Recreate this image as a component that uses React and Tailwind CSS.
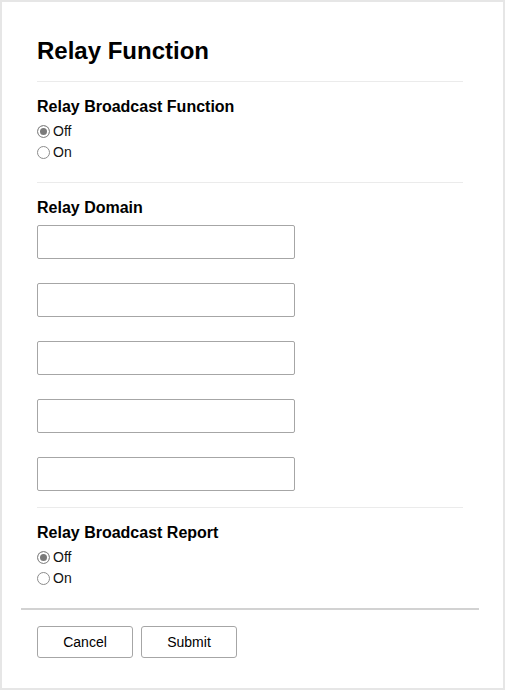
const font = { fontFamily: '"Liberation Sans", Arial, sans-serif' }

function Radio({ name, label, checked }) {
    return (
        <label className="flex items-center h-[21px] text-[14px] text-[#111]">
            <input
                type="radio"
                name={name}
                defaultChecked={checked}
                className="appearance-none m-0 w-[13px] h-[13px] rounded-full border border-[#8c8c8c] bg-white checked:bg-[#7a7a7a] checked:shadow-[inset_0_0_0_2px_#fff]"
            />
            <span className="ml-[3px]">{label}</span>
        </label>
    )
}

function Divider() {
    return <div className="h-px bg-[#ebebeb]" />
}

export default function App() {
    return (
        <div style={font} className="w-[505px] h-[690px] border-2 border-[#e6e6e6] bg-white flex flex-col text-black">
            <div className="pl-[35px] pr-[40px] pt-[35px]">
                <h1 className="text-[24px] leading-[28px] font-bold">Relay Function</h1>
                <div className="mt-[16px]"><Divider /></div>

                {/* broadcast function */}
                <h2 className="mt-[15px] text-[16px] leading-[20px] font-bold">Relay Broadcast Function</h2>
                <div className="mt-[4px]">
                    <Radio name="func" label="Off" checked />
                    <Radio name="func" label="On" />
                </div>
                <div className="mt-[19px]"><Divider /></div>

                {/* domains */}
                <h2 className="mt-[15px] text-[16px] leading-[20px] font-bold">Relay Domain</h2>
                <div className="mt-[7px] flex flex-col gap-[24px]">
                    {[0, 1, 2, 3, 4].map(i => (
                        <input key={i} type="text" className="w-[258px] h-[34px] border border-[#a6a6a6] rounded-[2px] px-2 text-[13px] outline-none" />
                    ))}
                </div>
                <div className="mt-[16px]"><Divider /></div>

                {/* report */}
                <h2 className="mt-[15px] text-[16px] leading-[20px] font-bold">Relay Broadcast Report</h2>
                <div className="mt-[4px]">
                    <Radio name="report" label="Off" checked />
                    <Radio name="report" label="On" />
                </div>
            </div>

            <div className="ml-[19px] mr-[24px] mt-[19px] h-[2px] bg-[#d2d2d2]" />

            <div className="pl-[35px] mt-[16px] flex gap-[8px]">
                <button className="w-[96px] h-[32px] border border-[#a6a6a6] rounded-[3px] bg-white text-[14px]">Cancel</button>
                <button className="w-[96px] h-[32px] border border-[#a6a6a6] rounded-[3px] bg-white text-[14px]">Submit</button>
            </div>
        </div>
    )
}
